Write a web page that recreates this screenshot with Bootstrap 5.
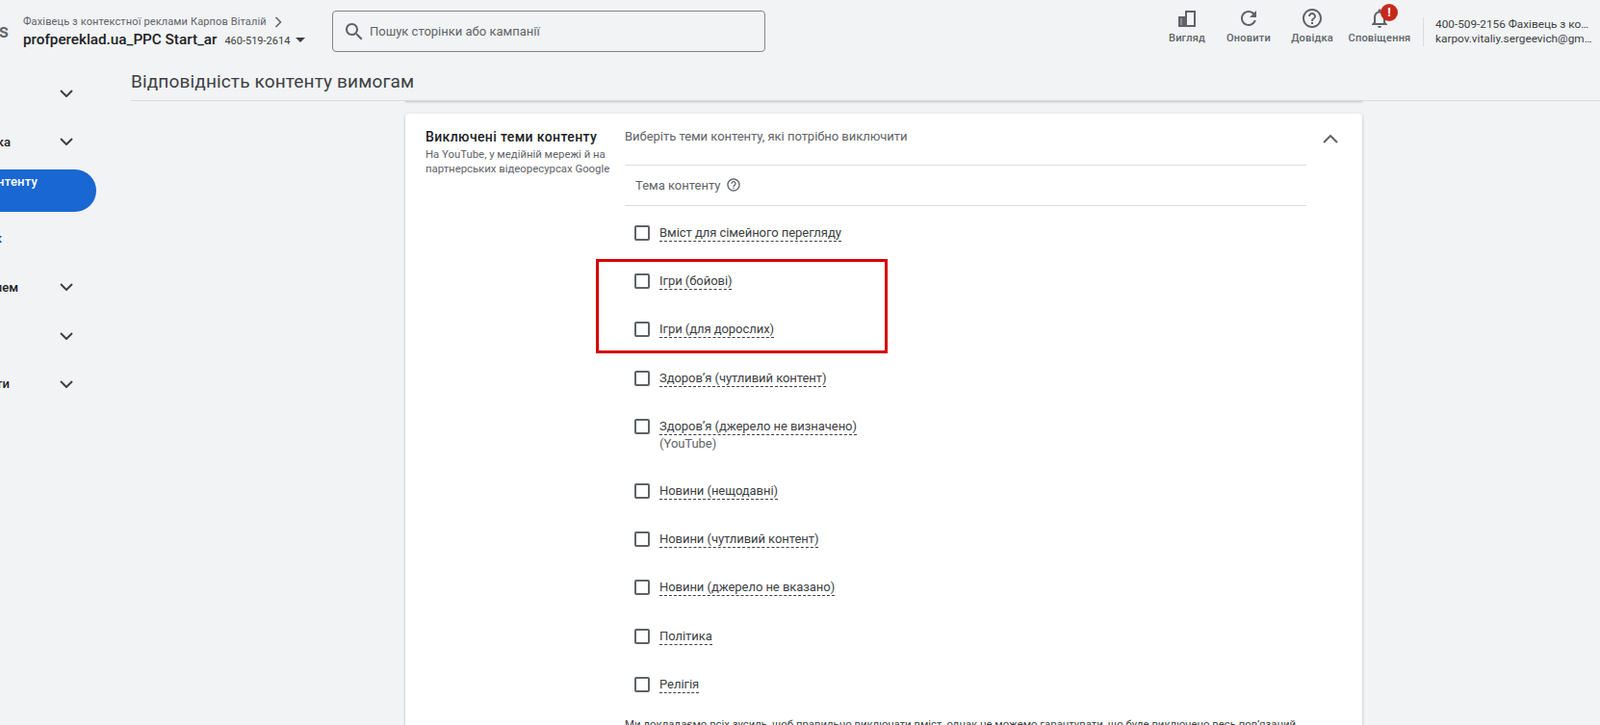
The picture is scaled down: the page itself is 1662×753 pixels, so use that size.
<!doctype html>
<html lang="uk">
<head>
<meta charset="utf-8">
<title>Відповідність контенту вимогам</title>
<link href="https://cdn.jsdelivr.net/npm/bootstrap@5.3.0/dist/css/bootstrap.min.css" rel="stylesheet">
<style>
html,body{height:753px;overflow:hidden}
body{background:#f1f3f4;font-family:Roboto,"Liberation Sans",sans-serif;color:#3c4043;font-size:13px}
.top-bar{height:70px}
.logo-cut{width:9px;margin-right:15px;padding-top:22px;height:70px;font:500 20px/20px Roboto,sans-serif;color:#5f6368;overflow:hidden}
.crumbs{width:321px;padding-top:15px}
.crumb-up{font-size:11px;line-height:15px;color:#5f6368;letter-spacing:.13px}
.crumb-acct{font-size:15.25px;font-weight:500;line-height:20px;color:#202124;margin-top:1px}
.crumb-id{font-size:11px;font-weight:400;color:#3c4043;margin-left:8px}
.tri{width:0;height:0;border-left:5px solid transparent;border-right:5px solid transparent;border-top:5px solid #3c4043;margin-left:6px;display:inline-block;vertical-align:2px}
.search-box{width:450px;height:43px;margin-top:11px;border:1px solid #80868b;border-radius:4px;padding-left:10px;color:#5f6368;font-size:13px;background:#f1f3f4}
.tools{margin-left:auto}
.tool{height:50px;padding-top:7px;font-size:11px;font-weight:500;line-height:14px;color:#5f6368;letter-spacing:.2px}
.tool svg{fill:#5f6368;display:block}
.tool-slot{height:24px;margin-bottom:2px}
.w64{width:64px}.w68{width:68px}.w72{width:72px}
.view-glyph{margin-top:2px}
.alert-dot{top:-3px;left:13px;width:18px;height:18px;border-radius:50%;background:#c5291c;color:#fff;font:700 13px/18px Roboto,sans-serif;text-align:center}
.acct{width:176px;height:30px;margin:18px 8px 0 9px;padding-left:12px;border-left:1px solid #dadce0;font-size:11.8px;line-height:14.5px}
.side-nav{width:136px;padding-top:2px;flex:none}
.side-row{height:50.3px;width:100px;font-size:13px;font-weight:500;color:#202124}
.cut-text{overflow:hidden;white-space:nowrap;display:flex;justify-content:flex-end;flex:none}
.link-blue{color:#174ea6}
.chev{position:static;width:14px;height:8px;fill:none;stroke:#3c4043;stroke-width:2}
.pill-on{height:44px;width:100px;background:#1967d2;border-radius:0 22px 22px 0;color:#fff;padding-top:4px;line-height:17px;letter-spacing:.2px}
.view-head{height:35px;border-bottom:1px solid #dadce0;font-size:19px;line-height:20px;color:#3c4043;padding-top:5px;letter-spacing:.15px}
.panels{margin-left:285px;width:994px}
.stub{height:1px;background:#dadce0;box-shadow:0 1px 2px rgba(60,64,67,.4);margin-top:-1px;margin-bottom:13px}
.panel-main{background:#fff;border-radius:4px 4px 0 0;box-shadow:0 1px 3px rgba(60,64,67,.35);min-height:660px}
.panel-left{width:228px;padding:14px 0 0 21px;flex:none}
.panel-title{font-size:14px;font-weight:500;line-height:20px;color:#202124;letter-spacing:.38px}
.panel-sub{font-size:11.35px;line-height:15px;color:#5f6368;margin-top:1px;white-space:nowrap}
.panel-mid{width:708px;flex:none}
.intro{height:54px;padding-top:15px;line-height:17px;border-bottom:1px solid #dadce0;color:#5f6368;letter-spacing:-.03px}
.topic-head{height:42px;padding:12px 0 0 11px;border-bottom:1px solid #dadce0;color:#5f6368;line-height:17px;gap:6px}
.topic-list{padding:20px 0 0 10px}
.topic-row{margin-bottom:34.2px;line-height:17px;gap:10px;letter-spacing:-.05px}
.topic-row .form-check-input{width:16px;height:16px;border:2px solid #5f6368;border-radius:2px;margin:0;flex:none}
.topic-text{margin-top:-1px}
.dash{border-bottom:1px dashed #3c4043;padding-bottom:1px}
.sub-line{color:#5f6368;line-height:18px;display:block;margin:1px 0 -2px}
.disclaim{font-size:11.33px;line-height:16px;color:#3c4043;margin-top:-9px;white-space:nowrap}
.panel-right{width:58px;padding:22px 0 0 17px}
.chev-up{width:16px;height:9px;fill:none;stroke:#5f6368;stroke-width:2;display:block}
.redbox{left:198px;top:151px;width:303px;height:98px;border:3px solid #d60000;pointer-events:none}
</style>
</head>
<body>
<header class="top-bar d-flex">
  <div class="logo-cut d-flex justify-content-end">s</div>
  <div class="crumbs">
    <div class="crumb-up d-flex align-items-center gap-2">Фахівець з контекстної реклами Карпов Віталій
      <svg width="8" height="12" viewBox="0 0 8 12" fill="none" stroke="#5f6368" stroke-width="1.5"><polyline points="1.5,1 6.5,6 1.5,11"/></svg>
    </div>
    <div class="crumb-acct">profpereklad.ua_PPC Start_ar<span class="crumb-id">460-519-2614</span><span class="tri"></span></div>
  </div>
  <div class="search-box d-flex align-items-center gap-1">
    <svg width="24" height="24" viewBox="0 0 24 24" fill="#5f6368"><path d="M15.5 14h-.79l-.28-.27C15.41 12.59 16 11.11 16 9.5 16 5.91 13.09 3 9.5 3S3 5.91 3 9.5 5.91 16 9.5 16c1.61 0 3.09-.59 4.23-1.57l.27.28v.79l5 4.99L20.49 19l-4.99-5zm-6 0C7.01 14 5 11.99 5 9.5S7.01 5 9.5 5 14 7.01 14 9.5 11.99 14 9.5 14z"/></svg>
    <span>Пошук сторінки або кампанії</span>
  </div>
  <div class="tools d-flex">
    <div class="tool w64 d-flex flex-column align-items-center">
      <div class="tool-slot d-flex align-items-center"><svg class="view-glyph" width="18" height="18" viewBox="0 0 18 18"><path d="M0 6H7V0H18V17H0ZM9 2V15H16V2Z" fill-rule="evenodd"/><rect x="2" y="8" width="2" height="7" fill="#8a8f94"/></svg></div>
      <span>Вигляд</span>
    </div>
    <div class="tool w64 d-flex flex-column align-items-center">
      <div class="tool-slot"><svg width="24" height="24" viewBox="0 0 24 24"><path d="M17.65 6.35C16.2 4.9 14.21 4 12 4c-4.42 0-7.99 3.58-7.99 8s3.57 8 7.99 8c3.73 0 6.84-2.55 7.73-6h-2.08c-.82 2.33-3.04 4-5.65 4-3.31 0-6-2.69-6-6s2.69-6 6-6c1.66 0 3.14.69 4.22 1.78L13 11h7V4l-2.35 2.35z"/></svg></div>
      <span>Оновити</span>
    </div>
    <div class="tool w68 d-flex flex-column align-items-center">
      <div class="tool-slot"><svg width="24" height="24" viewBox="0 0 24 24"><path d="M11 18h2v-2h-2v2zm1-16C6.48 2 2 6.48 2 12s4.48 10 10 10 10-4.48 10-10S17.52 2 12 2zm0 18c-4.41 0-8-3.59-8-8s3.59-8 8-8 8 3.59 8 8-3.59 8-8 8zm0-14c-2.21 0-4 1.79-4 4h2c0-1.1.9-2 2-2s2 .9 2 2c0 2-3 1.75-3 5h2c0-2.25 3-2.5 3-5 0-2.21-1.79-4-4-4z"/></svg></div>
      <span>Довідка</span>
    </div>
    <div class="tool w72 d-flex flex-column align-items-center">
      <div class="tool-slot position-relative"><svg width="24" height="24" viewBox="0 0 24 24"><path d="M12 22c1.1 0 2-.9 2-2h-4c0 1.1.9 2 2 2zm6-6v-5c0-3.07-1.63-5.64-4.5-6.32V4c0-.83-.67-1.5-1.5-1.5s-1.5.67-1.5 1.5v.68C7.64 5.36 6 7.92 6 11v5l-2 2v1h16v-1l-2-2zm-2 1H8v-6c0-2.48 1.51-4.5 4-4.5s4 2.02 4 4.5v6z"/></svg><span class="alert-dot position-absolute">!</span></div>
      <span>Сповіщення</span>
    </div>
    <div class="acct">
      <div class="text-truncate">400-509-2156 Фахівець з контекстної</div>
      <div class="text-truncate">karpov.vitaliy.sergeevich@gmail.com</div>
    </div>
  </div>
</header>
<div class="d-flex">
  <nav class="side-nav">
    <div class="side-row d-flex align-items-center justify-content-end"><svg class="chev me-4" viewBox="0 0 14 8"><polyline points="1,1 7,7 13,1"/></svg></div>
    <div class="side-row d-flex align-items-center"><span class="cut-text" style="width:11px">Статистика</span><svg class="chev ms-auto me-4" viewBox="0 0 14 8"><polyline points="1,1 7,7 13,1"/></svg></div>
    <div class="side-row d-flex align-items-center"><div class="pill-on"><span class="cut-text" style="width:39px">Відповідність контенту</span></div></div>
    <div class="side-row d-flex align-items-center"><span class="cut-text link-blue" style="width:2px">Статистик</span></div>
    <div class="side-row d-flex align-items-center"><span class="cut-text" style="width:19px">Усунення проблем</span><svg class="chev ms-auto me-4" viewBox="0 0 14 8"><polyline points="1,1 7,7 13,1"/></svg></div>
    <div class="side-row d-flex align-items-center justify-content-end"><svg class="chev me-4" viewBox="0 0 14 8"><polyline points="1,1 7,7 13,1"/></svg></div>
    <div class="side-row d-flex align-items-center"><span class="cut-text" style="width:10px">Звіти</span><svg class="chev ms-auto me-4" viewBox="0 0 14 8"><polyline points="1,1 7,7 13,1"/></svg></div>
  </nav>
  <main class="flex-grow-1">
    <div class="view-head">Відповідність контенту вимогам</div>
    <div class="panels">
      <div class="stub"></div>
      <section class="panel-main position-relative d-flex">
        <div class="panel-left">
          <div class="panel-title">Виключені теми контенту</div>
          <div class="panel-sub">На YouTube, у медійній мережі й на<br>партнерських відеоресурсах Google</div>
        </div>
        <div class="panel-mid">
          <div class="intro">Виберіть теми контенту, які потрібно виключити</div>
          <div class="topic-head d-flex align-items-start">Тема контенту
            <svg width="16" height="16" viewBox="0 0 24 24" fill="#5f6368"><path d="M11 18h2v-2h-2v2zm1-16C6.48 2 2 6.48 2 12s4.48 10 10 10 10-4.48 10-10S17.52 2 12 2zm0 18c-4.41 0-8-3.59-8-8s3.59-8 8-8 8 3.59 8 8-3.59 8-8 8zm0-14c-2.21 0-4 1.79-4 4h2c0-1.1.9-2 2-2s2 .9 2 2c0 2-3 1.75-3 5h2c0-2.25 3-2.5 3-5 0-2.21-1.79-4-4-4z"/></svg>
          </div>
          <div class="topic-list">
            <label class="topic-row d-flex"><input class="form-check-input" type="checkbox"><span class="topic-text"><span class="dash">Вміст для сімейного перегляду</span></span></label>
            <label class="topic-row d-flex"><input class="form-check-input" type="checkbox"><span class="topic-text"><span class="dash">Ігри (бойові)</span></span></label>
            <label class="topic-row d-flex"><input class="form-check-input" type="checkbox"><span class="topic-text"><span class="dash">Ігри (для дорослих)</span></span></label>
            <label class="topic-row d-flex"><input class="form-check-input" type="checkbox"><span class="topic-text"><span class="dash">Здоров’я (чутливий контент)</span></span></label>
            <label class="topic-row d-flex"><input class="form-check-input" type="checkbox"><span class="topic-text"><span class="dash">Здоров’я (джерело не визначено)</span><span class="sub-line">(YouTube)</span></span></label>
            <label class="topic-row d-flex"><input class="form-check-input" type="checkbox"><span class="topic-text"><span class="dash">Новини (нещодавні)</span></span></label>
            <label class="topic-row d-flex"><input class="form-check-input" type="checkbox"><span class="topic-text"><span class="dash">Новини (чутливий контент)</span></span></label>
            <label class="topic-row d-flex"><input class="form-check-input" type="checkbox"><span class="topic-text"><span class="dash">Новини (джерело не вказано)</span></span></label>
            <label class="topic-row d-flex"><input class="form-check-input" type="checkbox"><span class="topic-text"><span class="dash">Політика</span></span></label>
            <label class="topic-row d-flex"><input class="form-check-input" type="checkbox"><span class="topic-text"><span class="dash">Релігія</span></span></label>
          </div>
          <p class="disclaim mb-0">Ми докладаємо всіх зусиль, щоб правильно виключати вміст, однак не можемо гарантувати, що буде виключено весь пов’язаний</p>
        </div>
        <div class="panel-right"><svg class="chev-up" viewBox="0 0 16 9"><polyline points="1,8 8,1 15,8"/></svg></div>
        <div class="redbox position-absolute"></div>
      </section>
    </div>
  </main>
</div>
<script src="https://cdn.jsdelivr.net/npm/bootstrap@5.3.0/dist/js/bootstrap.bundle.min.js"></script>
</body>
</html>
